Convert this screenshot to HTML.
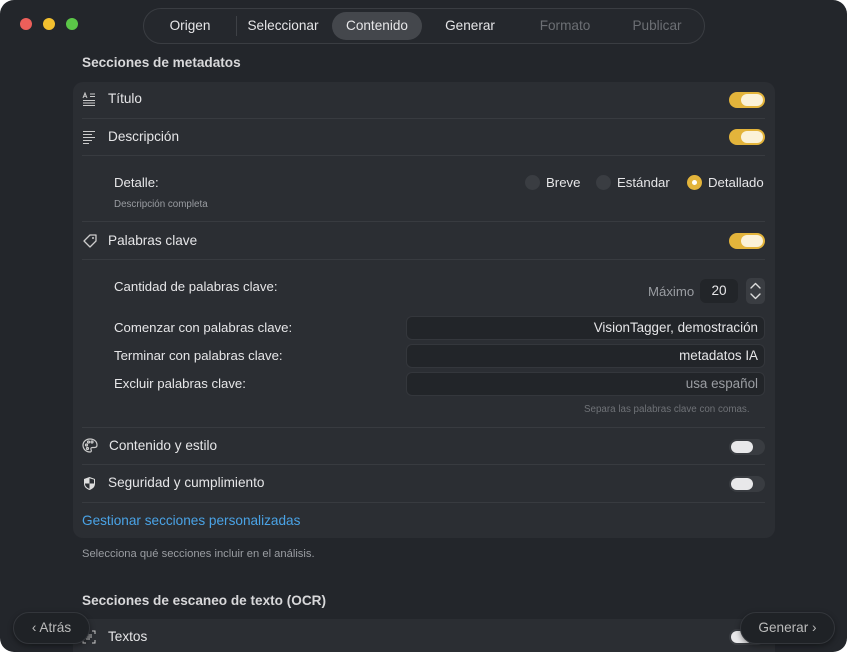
<!DOCTYPE html><html><head><meta charset="utf-8"><style>
*{margin:0;padding:0;box-sizing:border-box}
body{width:847px;height:652px;background:#fff;overflow:hidden;font-family:"Liberation Sans",sans-serif;color:#e6e6e8}
.win{position:absolute;left:0;top:0;width:847px;height:652px;border-radius:14px;background:#23262b;overflow:hidden}
.a{position:absolute;white-space:nowrap}
.card{position:absolute;left:73px;width:702px;background:#2b2e33;border-radius:10px}
.div{position:absolute;left:82px;width:683px;height:1px;background:#383b40}
.t{font-size:13.6px;color:#e6e6e8}
.tog{position:absolute;left:729px;width:36px;height:16px;border-radius:8px;background:#e3b43b}
.tog::after{content:"";position:absolute;right:2px;top:2px;width:22px;height:12px;border-radius:6px;background:#fbf2d8}
.off{background:#393c41}.off::after{left:2px;right:auto;background:#e8e8ea}
.inp{position:absolute;left:406px;width:359px;height:24px;border-radius:6px;background:#222529;border:1px solid #34373c;text-align:right;padding-right:6px;font-size:13.4px;line-height:22px}
.tab{position:absolute;top:12px;height:28px;line-height:28px;font-size:13.6px;text-align:center}
.dot{position:absolute;top:18px;width:12px;height:12px;border-radius:50%}
.radio{position:absolute;top:175px;width:15px;height:15px;border-radius:50%;background:#3a3d42}
</style></head><body><div class="win">
<div class="dot" style="left:20px;background:#ec5f5a"></div>
<div class="dot" style="left:43px;background:#f3c02f"></div>
<div class="dot" style="left:66px;background:#5bc648"></div>
<div class="a" style="left:143px;top:8px;width:562px;height:36px;border-radius:18px;background:#25282d;border:1px solid #3a3d42"></div>
<div class="a" style="left:332px;top:12px;width:90px;height:28px;border-radius:14px;background:#44474c"></div>
<div class="a" style="left:236px;top:16px;width:1px;height:20px;background:#3e4146"></div>
<div class="tab" style="left:160px;width:60px">Origen</div>
<div class="tab" style="left:240px;width:86px">Seleccionar</div>
<div class="tab" style="left:332px;width:90px">Contenido</div>
<div class="tab" style="left:432px;width:76px">Generar</div>
<div class="tab" style="left:530px;width:70px;color:#6c6f74">Formato</div>
<div class="tab" style="left:622px;width:70px;color:#6c6f74">Publicar</div>

<div class="a" style="left:82px;top:55px;font-size:13.6px;font-weight:bold;color:#d8d8da">Secciones de metadatos</div>
<div class="card" style="top:82px;height:456px"></div>
<svg class="a" style="left:82px;top:92px" width="14" height="14" viewBox="0 0 14 14" fill="none" stroke="#ccc" stroke-width="1"><path d="M1 6L3 1L5 6M1.7 4.3H4.3M8 2H13M8 4.5H13M1 8.5H13M1 11H13M1 13.5H13"/></svg>
<div class="a t" style="left:108px;top:91px">Título</div><div class="tog" style="top:92px"></div>
<div class="div" style="top:118px"></div>
<svg class="a" style="left:82px;top:130px" width="14" height="14" viewBox="0 0 14 14" fill="none" stroke="#ccc" stroke-width="1"><path d="M1 1.5H13M1 4.5H10M1 7.5H13M1 10.5H10M1 13.5H7"/></svg>
<div class="a t" style="left:108px;top:129px">Descripción</div><div class="tog" style="top:129px"></div>
<div class="div" style="top:155px"></div>
<div class="a t" style="left:114px;top:175px;font-size:13.2px">Detalle:</div>
<div class="a" style="left:114px;top:199px;font-size:9.8px;color:#9a9da2">Descripción completa</div>
<div class="radio" style="left:525px"></div><div class="a t" style="left:546px;top:175px;font-size:13.2px">Breve</div>
<div class="radio" style="left:596px"></div><div class="a t" style="left:617px;top:175px;font-size:13.2px">Estándar</div>
<div class="radio" style="left:687px;background:#e3b43b"><div style="position:absolute;left:5px;top:5px;width:5px;height:5px;border-radius:50%;background:#fff"></div></div>
<div class="a t" style="left:708px;top:175px;font-size:13.2px">Detallado</div>
<div class="div" style="top:221px"></div>
<svg class="a" style="left:82px;top:233px" width="16" height="16" viewBox="0 0 16 16"><path d="M8 2H14V8L8 14L2 8Z" fill="none" stroke="#ccc" stroke-width="1.3" stroke-linejoin="round"/><circle cx="11" cy="5" r="1" fill="#ccc"/></svg>
<div class="a t" style="left:108px;top:233px">Palabras clave</div><div class="tog" style="top:233px"></div>
<div class="div" style="top:259px"></div>
<div class="a t" style="left:114px;top:279px;font-size:13.2px">Cantidad de palabras clave:</div>
<div class="a" style="left:648px;top:284px;font-size:13.2px;color:#9a9da2">Máximo</div>
<div class="a" style="left:700px;top:279px;width:38px;height:24px;border-radius:6px;background:#222529;text-align:center;line-height:24px;font-size:13.6px">20</div>
<div class="a" style="left:746px;top:278px;width:19px;height:26px;border-radius:5px;background:#3a3d42"></div>
<svg class="a" style="left:746px;top:278px" width="19" height="26" viewBox="0 0 19 26" fill="none" stroke="#ddd" stroke-width="1.4" stroke-linecap="round" stroke-linejoin="round"><path d="M5 10L9.5 5.5L14 10M5 16L9.5 20.5L14 16"/></svg>
<div class="a t" style="left:114px;top:320px;font-size:13.2px">Comenzar con palabras clave:</div>
<div class="inp" style="top:316px">VisionTagger, demostración</div>
<div class="a t" style="left:114px;top:348px;font-size:13.2px">Terminar con palabras clave:</div>
<div class="inp" style="top:344px">metadatos IA</div>
<div class="a t" style="left:114px;top:376px;font-size:13.2px">Excluir palabras clave:</div>
<div class="inp" style="top:372px;color:#9a9da2">usa español</div>
<div class="a" style="left:584px;top:404px;font-size:9.8px;color:#6f7277">Separa las palabras clave con comas.</div>
<div class="div" style="top:427px"></div>
<svg class="a" style="left:82px;top:438px" width="16" height="15" viewBox="0 0 16 15" fill="none" stroke="#ccc" stroke-width="1.2"><path d="M8 1C4 1 1 3.8 1 7.3C1 11 4 14 8 14C9.5 14 9.5 12.5 9 11.5C8.5 10.3 9.3 9.5 10.5 9.5H12.5C14 9.5 15 8.5 15 7C15 3.5 12 1 8 1Z"/><circle cx="4.5" cy="7" r="1"/><circle cx="6.5" cy="4" r="1"/><circle cx="10" cy="4" r="1"/><circle cx="5.5" cy="10.5" r="1"/></svg>
<div class="a t" style="left:109px;top:438px">Contenido y estilo</div><div class="tog off" style="top:439px"></div>
<div class="div" style="top:464px"></div>
<svg class="a" style="left:83px;top:476px" width="13" height="15" viewBox="0 0 13 15"><path d="M6.5 1L12 3V7.5C12 11 9.5 13 6.5 14C3.5 13 1 11 1 7.5V3Z" fill="#ddd"/><path d="M6.5 2.2V7.5H11V3.6Z M6.5 7.5V12.8C4.2 12 2 10.3 2 7.5Z" fill="#2b2e33"/></svg>
<div class="a t" style="left:108px;top:475px">Seguridad y cumplimiento</div><div class="tog off" style="top:476px"></div>
<div class="div" style="top:502px"></div>
<div class="a" style="left:82px;top:513px;font-size:13.6px;color:#4aa3e6">Gestionar secciones personalizadas</div>
<div class="a" style="left:82px;top:548px;font-size:11.2px;color:#9a9da2">Selecciona qué secciones incluir en el análisis.</div>
<div class="a" style="left:82px;top:593px;font-size:13.6px;font-weight:bold;color:#d8d8da">Secciones de escaneo de texto (OCR)</div>
<div class="card" style="top:619px;height:60px"></div>
<svg class="a" style="left:82px;top:630px" width="14" height="14" viewBox="0 0 14 14" fill="none" stroke="#ccc" stroke-width="1"><path d="M1 4V1H4M10 1H13V4M13 10V13H10M4 13H1V10M4 5H10M4 7H10M4 9H8"/></svg>
<div class="a t" style="left:108px;top:629px">Textos</div><div class="tog off" style="top:629px"></div>
<div class="a" style="left:13px;top:612px;width:77px;height:32px;border-radius:16px;background:#1f2226;border:1px solid #33363b;box-shadow:0 2px 6px rgba(0,0,0,.4);font-size:13.6px;line-height:30px;color:#bbb;text-align:center">&#8249; Atrás</div>
<div class="a" style="left:740px;top:612px;width:95px;height:32px;border-radius:16px;background:#1f2226;border:1px solid #33363b;box-shadow:0 2px 6px rgba(0,0,0,.4);font-size:13.6px;line-height:30px;color:#bbb;text-align:center">Generar &#8250;</div>
</div></body></html>
